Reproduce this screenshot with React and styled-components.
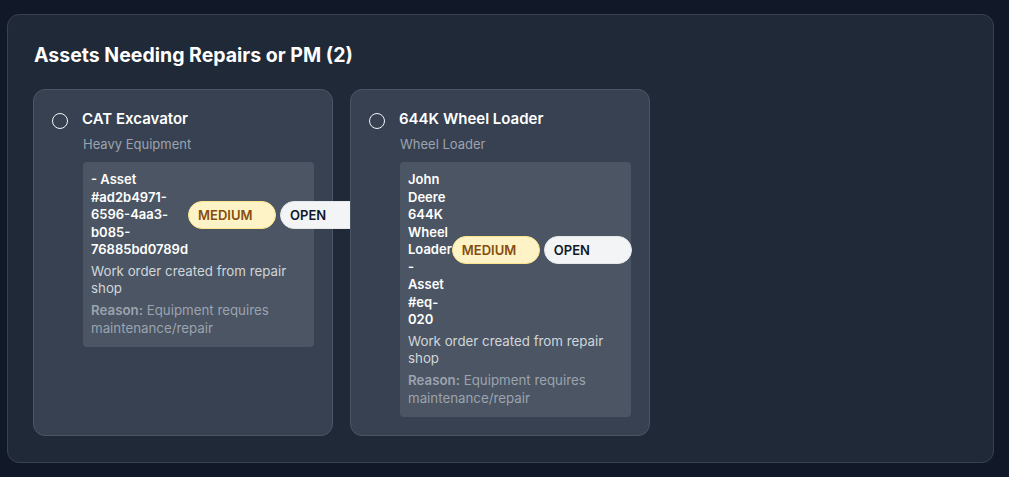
import React from "react";
import styled, { createGlobalStyle } from "styled-components";

const assets = [
  {
    id: 1,
    name: "CAT Excavator",
    type: "Heavy Equipment",
    label: "- Asset #ad2b4971-6596-4aa3-b085-76885bd0789d",
    priority: "MEDIUM",
    status: "OPEN",
    description: "Work order created from repair shop",
    reason: "Equipment requires maintenance/repair",
  },
  {
    id: 2,
    name: "644K Wheel Loader",
    type: "Wheel Loader",
    label: "John Deere 644K Wheel Loader - Asset #eq-020",
    priority: "MEDIUM",
    status: "OPEN",
    description: "Work order created from repair shop",
    reason: "Equipment requires maintenance/repair",
  },
];

const App = () => {
  return (
    <>
      <GlobalStyle />
      <Panel>
        <PanelTitle>Assets Needing Repairs or PM ({assets.length})</PanelTitle>
        <CardGrid>
          {assets.map((asset) => (
            <AssetCard key={asset.id}>
              <CardHeader>
                <Radio />
                <CardTitle>{asset.name}</CardTitle>
              </CardHeader>
              <CardSubtitle>{asset.type}</CardSubtitle>
              <OrderBox>
                <OrderRow>
                  <OrderLabel>{asset.label}</OrderLabel>
                  <Badge $variant="priority">{asset.priority}</Badge>
                  <Badge $variant="status">{asset.status}</Badge>
                </OrderRow>
                <OrderText>{asset.description}</OrderText>
                <ReasonText>
                  <strong>Reason:</strong> {asset.reason}
                </ReasonText>
              </OrderBox>
            </AssetCard>
          ))}
        </CardGrid>
      </Panel>
    </>
  );
};

export default App;

const GlobalStyle = createGlobalStyle`
  html, body {
    margin: 0;
    background-color: #111827;
    font-family: Inter, "Noto Sans", "Liberation Sans", sans-serif;
  }
  body {
    padding: 14px 15px 14px 7px;
  }
`;

const Panel = styled.section`
  background-color: #1f2937;
  border: 1px solid #374151;
  border-radius: 12px;
  padding: 26px 25px 26px;
`;

const PanelTitle = styled.h2`
  margin: 0 0 20px 1px;
  font-size: 19.5px;
  line-height: 28px;
  font-weight: 700;
  color: #ffffff;
`;

const CardGrid = styled.div`
  display: grid;
  grid-template-columns: repeat(3, 300px);
  gap: 17px;
`;

const AssetCard = styled.div`
  background-color: #374151;
  border: 1px solid #4b5563;
  border-radius: 12px;
  padding: 18px;
`;

const CardHeader = styled.div`
  display: flex;
  align-items: center;
  gap: 14px;
`;

const Radio = styled.span`
  width: 16px;
  height: 16px;
  box-sizing: border-box;
  border: 1.5px solid #f3f4f6;
  border-radius: 50%;
  flex-shrink: 0;
  margin-top: 4px;
`;

const CardTitle = styled.h3`
  margin: 0;
  font-size: 15px;
  line-height: 22px;
  font-weight: 600;
  color: #ffffff;
`;

const CardSubtitle = styled.div`
  margin: 4px 0 8px 31px;
  font-size: 13px;
  line-height: 20px;
  color: #9ca3af;
`;

const OrderBox = styled.div`
  margin-left: 31px;
  background-color: #4b5563;
  border-radius: 4px;
  padding: 9px 8px 9px;
`;

const OrderRow = styled.div`
  display: flex;
  align-items: center;
`;

const OrderLabel = styled.div`
  flex: 1 1 0;
  min-width: min-content;
  font-size: 13px;
  line-height: 17.5px;
  font-weight: 600;
  color: #ffffff;
`;

const Badge = styled.span`
  flex-shrink: 0;
  width: 88px;
  box-sizing: border-box;
  height: 28px;
  display: flex;
  align-items: center;
  padding: 0 9px;
  border-radius: 999px;
  font-size: 13px;
  font-weight: 600;
  background-color: ${(p) => (p.$variant === "priority" ? "#fef3c7" : "#f3f4f6")};
  color: ${(p) => (p.$variant === "priority" ? "#854d0e" : "#111827")};
  border: 1px solid ${(p) => (p.$variant === "priority" ? "#fde68a" : "#e5e7eb")};
  margin-left: ${(p) => (p.$variant === "status" ? "4px" : "0")};
`;

const OrderText = styled.p`
  margin: 4px 0 0;
  font-size: 13.3px;
  line-height: 17.75px;
  color: #d1d5db;
`;

const ReasonText = styled.p`
  margin: 4px 0 0;
  font-size: 13.3px;
  line-height: 17.75px;
  color: #9ca3af;

  strong {
    font-weight: 600;
  }
`;
